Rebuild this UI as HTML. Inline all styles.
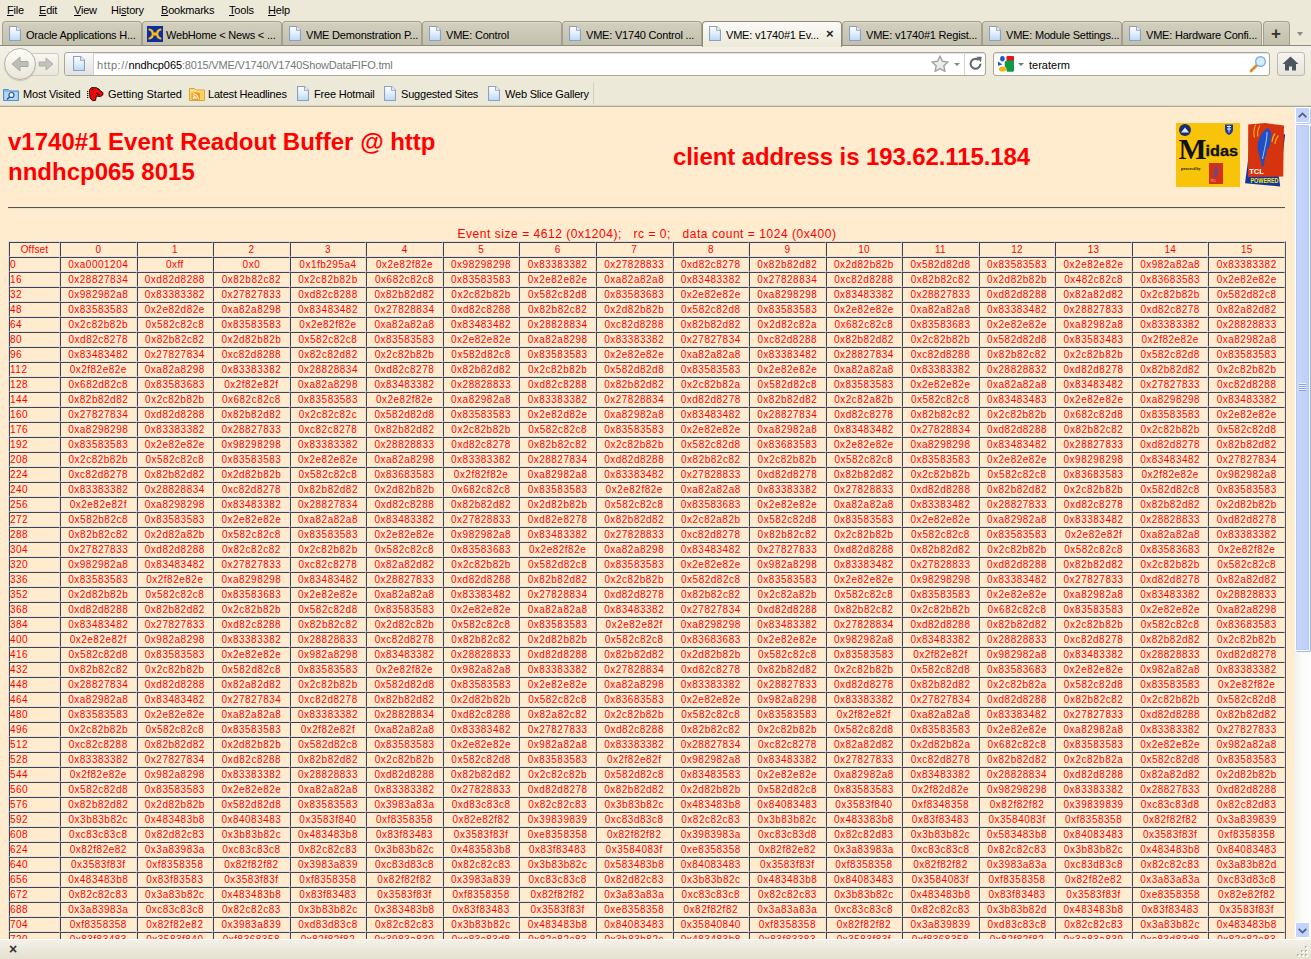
<!DOCTYPE html><html><head><meta charset="utf-8"><title>VME: v1740#1 Event Readout Buffer</title><style>
html,body{margin:0;padding:0;}
body{width:1311px;height:959px;overflow:hidden;background:#ECE9D8;position:relative;font-family:"Liberation Sans",sans-serif;}
#chrome{position:absolute;left:0;top:0;width:1311px;height:106px;background:#ECE9D8;font-size:11px;color:#000;}
.abs{position:absolute;}
.mi{position:absolute;top:3px;height:14px;line-height:14px;font-size:11px;white-space:nowrap;letter-spacing:-0.2px;}
.mi u{text-decoration:underline;}
.tab{position:absolute;top:21px;height:24px;width:138px;border:1px solid #a3a08f;border-bottom:none;border-radius:4px 4px 0 0;background:linear-gradient(#d3d0bf,#c1beab);box-shadow:inset 0 1px 0 #dedbcb;}
.tab.act{top:21px;height:25px;background:linear-gradient(#fbfaf6,#ECE9D8);border-color:#8e8b7c;z-index:3;box-shadow:none;}
.tab .tx{position:absolute;left:23px;top:6px;font-size:11px;line-height:14px;white-space:nowrap;overflow:hidden;width:114px;color:#000;letter-spacing:-0.2px;}
.tab.act .tx{top:6px;width:100px;}
.pg{position:absolute;width:12px;height:15px;}
#tabline{position:absolute;left:0;top:45px;width:1311px;height:1px;background:#8e8b7c;z-index:2;}
#navbar{position:absolute;left:0;top:46px;width:1311px;height:36px;background:linear-gradient(#f3f1e7,#ECE9D8);}
.box{position:absolute;top:52px;height:22px;border:1px solid #a9a799;border-radius:3px;background:#fff;box-shadow:inset 0 1px 1px rgba(0,0,0,.12);}
#content{position:absolute;left:0;top:107px;width:1294px;height:832px;overflow:hidden;background:#FFEBCD;color:#f00;}
#contentborder{position:absolute;left:0;top:105px;width:1311px;height:2px;background:#aca993;border-top:1px solid #d8d5c4;box-sizing:border-box;}
#page{position:absolute;left:8px;top:0;width:1278px;}
h1{font-size:24px;line-height:30px;margin:0;font-weight:bold;color:#f00;}
#hr{position:absolute;left:0;top:100px;width:1277px;height:0;border-top:1px solid #555;border-bottom:1px solid #e9e2d3;}
#cap{position:absolute;left:0;top:120px;width:1278px;letter-spacing:.54px;text-align:center;font-size:12px;line-height:14px;color:#f00;white-space:pre;}
table#d{position:absolute;left:0;top:134px;width:1278px;border-collapse:separate;border-spacing:0;border:1px solid;border-color:#dcdbe6 #555 #555 #dcdbe6;table-layout:fixed;font-size:10px;color:#f00;}
table#d td,table#d th{border:1px solid;border-color:#444 #e3e0e8 #e3e0e8 #444;padding:1px 0;height:11px;line-height:11px;text-align:center;font-weight:normal;white-space:nowrap;overflow:hidden;letter-spacing:.5px;}
table#d th{letter-spacing:.2px;}
table#d td.o{text-align:left;}
#sb{position:absolute;left:1294px;top:107px;width:17px;height:832px;background:linear-gradient(90deg,#f0f0ec,#fbfbf9 50%,#fefefe);}
#bottom{position:absolute;left:0;top:939px;width:1311px;height:20px;background:linear-gradient(#f3f1e7,#e4e1d0);border-top:1px solid #fff;box-sizing:border-box;}
</style></head><body>
<div id="chrome">
<div class="mi" style="left:7px"><u>F</u>ile</div>
<div class="mi" style="left:39px"><u>E</u>dit</div>
<div class="mi" style="left:74px"><u>V</u>iew</div>
<div class="mi" style="left:111px">Hi<u>s</u>tory</div>
<div class="mi" style="left:161px"><u>B</u>ookmarks</div>
<div class="mi" style="left:229px"><u>T</u>ools</div>
<div class="mi" style="left:268px"><u>H</u>elp</div>
<div class="tab" style="left:2px"><svg class="pg" style="left:6px;top:4px" width="12" height="15" viewBox="0 0 11 14" preserveAspectRatio="none"><defs><linearGradient id="pgg" x1="0" y1="0" x2="0" y2="1"><stop offset="0" stop-color="#ffffff"/><stop offset=".45" stop-color="#e6f1fd"/><stop offset="1" stop-color="#b9d9f8"/></linearGradient></defs><path d="M0.5 0.5h6.5l3.5 3.5v9.5h-10z" fill="url(#pgg)" stroke="#8c9fc4"/><path d="M7 0.5v3.5h3.5" fill="#fff" stroke="#8ea3c4"/></svg><div class="tx">Oracle Applications H...</div></div>
<div class="tab" style="left:142px"><svg class="abs" style="left:4px;top:4px" width="16" height="16" viewBox="0 0 16 16"><rect width="16" height="16" fill="#0c2ca0"/><path d="M2.500 3.500C7 4.500 7 11.500 2.500 12.500M13.500 3.500C9 4.500 9 11.500 13.500 12.500" stroke="#f8bc14" stroke-width="2.200" stroke-linecap="round" fill="none"/><circle cx="8" cy="8" r="1.800" fill="#f8bc14"/></svg><div class="tx">WebHome &lt; News &lt; ...</div></div>
<div class="tab" style="left:282px"><svg class="pg" style="left:6px;top:4px" width="12" height="15" viewBox="0 0 11 14" preserveAspectRatio="none"><defs><linearGradient id="pgg" x1="0" y1="0" x2="0" y2="1"><stop offset="0" stop-color="#ffffff"/><stop offset=".45" stop-color="#e6f1fd"/><stop offset="1" stop-color="#b9d9f8"/></linearGradient></defs><path d="M0.5 0.5h6.5l3.5 3.5v9.5h-10z" fill="url(#pgg)" stroke="#8c9fc4"/><path d="M7 0.5v3.5h3.5" fill="#fff" stroke="#8ea3c4"/></svg><div class="tx">VME Demonstration P...</div></div>
<div class="tab" style="left:422px"><svg class="pg" style="left:6px;top:4px" width="12" height="15" viewBox="0 0 11 14" preserveAspectRatio="none"><defs><linearGradient id="pgg" x1="0" y1="0" x2="0" y2="1"><stop offset="0" stop-color="#ffffff"/><stop offset=".45" stop-color="#e6f1fd"/><stop offset="1" stop-color="#b9d9f8"/></linearGradient></defs><path d="M0.5 0.5h6.5l3.5 3.5v9.5h-10z" fill="url(#pgg)" stroke="#8c9fc4"/><path d="M7 0.5v3.5h3.5" fill="#fff" stroke="#8ea3c4"/></svg><div class="tx">VME: Control</div></div>
<div class="tab" style="left:562px"><svg class="pg" style="left:6px;top:4px" width="12" height="15" viewBox="0 0 11 14" preserveAspectRatio="none"><defs><linearGradient id="pgg" x1="0" y1="0" x2="0" y2="1"><stop offset="0" stop-color="#ffffff"/><stop offset=".45" stop-color="#e6f1fd"/><stop offset="1" stop-color="#b9d9f8"/></linearGradient></defs><path d="M0.5 0.5h6.5l3.5 3.5v9.5h-10z" fill="url(#pgg)" stroke="#8c9fc4"/><path d="M7 0.5v3.5h3.5" fill="#fff" stroke="#8ea3c4"/></svg><div class="tx">VME: V1740 Control ...</div></div>
<div class="tab act" style="left:702px"><svg class="pg" style="left:6px;top:4px" width="12" height="15" viewBox="0 0 11 14" preserveAspectRatio="none"><defs><linearGradient id="pgg" x1="0" y1="0" x2="0" y2="1"><stop offset="0" stop-color="#ffffff"/><stop offset=".45" stop-color="#e6f1fd"/><stop offset="1" stop-color="#b9d9f8"/></linearGradient></defs><path d="M0.5 0.5h6.5l3.5 3.5v9.5h-10z" fill="url(#pgg)" stroke="#8c9fc4"/><path d="M7 0.5v3.5h3.5" fill="#fff" stroke="#8ea3c4"/></svg><div class="tx">VME: v1740#1 Ev...</div><div class="abs" style="left:123px;top:5px;font-size:13px;line-height:14px;font-weight:bold;color:#222">&#215;</div></div>
<div class="tab" style="left:842px"><svg class="pg" style="left:6px;top:4px" width="12" height="15" viewBox="0 0 11 14" preserveAspectRatio="none"><defs><linearGradient id="pgg" x1="0" y1="0" x2="0" y2="1"><stop offset="0" stop-color="#ffffff"/><stop offset=".45" stop-color="#e6f1fd"/><stop offset="1" stop-color="#b9d9f8"/></linearGradient></defs><path d="M0.5 0.5h6.5l3.5 3.5v9.5h-10z" fill="url(#pgg)" stroke="#8c9fc4"/><path d="M7 0.5v3.5h3.5" fill="#fff" stroke="#8ea3c4"/></svg><div class="tx">VME: v1740#1 Regist...</div></div>
<div class="tab" style="left:982px"><svg class="pg" style="left:6px;top:4px" width="12" height="15" viewBox="0 0 11 14" preserveAspectRatio="none"><defs><linearGradient id="pgg" x1="0" y1="0" x2="0" y2="1"><stop offset="0" stop-color="#ffffff"/><stop offset=".45" stop-color="#e6f1fd"/><stop offset="1" stop-color="#b9d9f8"/></linearGradient></defs><path d="M0.5 0.5h6.5l3.5 3.5v9.5h-10z" fill="url(#pgg)" stroke="#8c9fc4"/><path d="M7 0.5v3.5h3.5" fill="#fff" stroke="#8ea3c4"/></svg><div class="tx">VME: Module Settings...</div></div>
<div class="tab" style="left:1122px"><svg class="pg" style="left:6px;top:4px" width="12" height="15" viewBox="0 0 11 14" preserveAspectRatio="none"><defs><linearGradient id="pgg" x1="0" y1="0" x2="0" y2="1"><stop offset="0" stop-color="#ffffff"/><stop offset=".45" stop-color="#e6f1fd"/><stop offset="1" stop-color="#b9d9f8"/></linearGradient></defs><path d="M0.5 0.5h6.5l3.5 3.5v9.5h-10z" fill="url(#pgg)" stroke="#8c9fc4"/><path d="M7 0.5v3.5h3.5" fill="#fff" stroke="#8ea3c4"/></svg><div class="tx">VME: Hardware Confi...</div></div>
<div id="tabline"></div>
<div class="tab" style="left:1263px;width:25px"><div class="abs" style="left:7px;top:2px;font-size:17px;line-height:20px;font-weight:bold;color:#333">+</div></div>
<div class="abs" style="left:1297px;top:32px;width:0;height:0;border-left:3px solid transparent;border-right:3px solid transparent;border-top:4px solid #8b8b88"></div>
<div id="navbar"></div>
<div class="abs" style="left:28px;top:53px;width:29px;height:21px;border:1px solid #cfccbe;border-radius:0 3px 3px 0;background:linear-gradient(#f8f7f1,#e9e6d9)"></div>
<svg class="abs" style="left:38px;top:56px" width="16" height="16" viewBox="0 0 16 16"><path d="M1 6h7V2l7 6-7 6v-4H1z" fill="#c3c3bd" stroke="#b0b0a9" stroke-width="1"/></svg>
<div class="abs" style="left:4px;top:48px;width:30px;height:30px;border:1px solid #b5b2a3;border-radius:16px;background:linear-gradient(#fdfcf9,#e9e6d8);box-shadow:0 1px 1px rgba(0,0,0,.15)"></div>
<svg class="abs" style="left:11px;top:55px" width="18" height="18" viewBox="0 0 18 18"><path d="M17 6.5H9V2L1 9l8 7v-4.5h8z" fill="#bdbdb7" stroke="#a9a9a2" stroke-width="1"/></svg>
<div class="box" style="left:64px;width:920px"></div>
<div class="abs" style="left:65px;top:53px;width:28px;height:22px;background:linear-gradient(#fafafa,#e2e2e2);border-right:1px solid #d0d0d0;border-radius:3px 0 0 3px"></div>
<svg class="pg" style="left:73px;top:56px" width="12" height="15" viewBox="0 0 11 14" preserveAspectRatio="none"><defs><linearGradient id="pgg" x1="0" y1="0" x2="0" y2="1"><stop offset="0" stop-color="#ffffff"/><stop offset=".45" stop-color="#e6f1fd"/><stop offset="1" stop-color="#b9d9f8"/></linearGradient></defs><path d="M0.5 0.5h6.5l3.5 3.5v9.5h-10z" fill="url(#pgg)" stroke="#8c9fc4"/><path d="M7 0.5v3.5h3.5" fill="#fff" stroke="#8ea3c4"/></svg>
<div class="abs" style="left:97px;top:58px;font-size:11px;line-height:15px;color:#777;white-space:nowrap"><span style="letter-spacing:.55px">http://</span><span style="color:#000;letter-spacing:-0.1px">nndhcp065</span><span style="letter-spacing:-0.19px">:8015/VME/V1740/V1740ShowDataFIFO.tml</span></div>
<svg class="abs" style="left:931px;top:55px" width="18" height="18" viewBox="0 0 16 16"><path d="M8 1l2.100 4.600 5 .6-3.700 3.400 1 5L8 12.100 3.600 14.600l1-5L.9 6.200l5-.6z" fill="#ececec" stroke="#a4a4a4" stroke-width="1.300" stroke-linejoin="round"/></svg>
<div class="abs" style="left:954px;top:63px;width:0;height:0;border-left:3px solid transparent;border-right:3px solid transparent;border-top:3px solid #888"></div>
<div class="abs" style="left:964px;top:54px;width:1px;height:21px;background:#d6d4c8"></div>
<svg class="abs" style="left:968px;top:56px" width="15" height="15" viewBox="0 0 14 14"><path d="M11.600 7.300a4.600 4.600 0 1 1-1.700-3.600" fill="none" stroke="#626a72" stroke-width="2"/><path d="M7.800 0.600l5 .2-.8 5z" fill="#626a72"/></svg>
<div class="box" style="left:993px;width:275px"></div>
<svg class="abs" style="left:998px;top:56px" width="16" height="16" viewBox="0 0 16 16"><rect width="16" height="16" rx="1.500" fill="#fff"/><rect x="8.500" y="0" width="7.500" height="5" rx="1" fill="#e8141c"/><path d="M6.700 5.500l2-1h7.300v10.500l-1 .8h-6l-.8-3.500-1.500-2z" fill="#0f9a47"/><ellipse cx="4.400" cy="2.700" rx="2.300" ry="2.700" fill="#1d56d8"/><path d="M0 5.500l4.400 2.900L0 9.800z" fill="#1d56d8"/><ellipse cx="4.600" cy="13" rx="3.600" ry="2.600" fill="#f4b60c"/></svg>
<div class="abs" style="left:1018px;top:63px;width:0;height:0;border-left:3px solid transparent;border-right:3px solid transparent;border-top:3px solid #777"></div>
<div class="abs" style="left:1029px;top:58px;font-size:11px;line-height:15px;color:#000">teraterm</div>
<svg class="abs" style="left:1249px;top:56px" width="17" height="17" viewBox="0 0 17 17"><path d="M2 15l6-6" stroke="#e3852c" stroke-width="2.800" stroke-linecap="round"/><circle cx="11.500" cy="5.500" r="4.800" fill="#d4ecfc" stroke="#7fb0e0" stroke-width="1.400"/></svg>
<div class="abs" style="left:1277px;top:52px;width:26px;height:22px;border:1px solid #bdbbae;border-radius:3px;background:linear-gradient(#f6f5f1,#e6e4da)"></div>
<svg class="abs" style="left:1282px;top:56px" width="17" height="15" viewBox="0 0 17 15"><path d="M8.500 0.500L0.500 8h2.500v6.500h4v-4h3v4h4V8h2.500z" fill="#4b5560"/></svg>
<svg class="abs" style="left:3px;top:86px" width="16" height="16" viewBox="0 0 16 16"><path d="M0.500 3.500h5l1.500 1.500h8.500v9.500h-15z" fill="#86bbea" stroke="#4f8fd0"/><rect x="1.500" y="6" width="13" height="8" fill="#b4d7f5"/><circle cx="8.500" cy="9" r="2.500" fill="#e9f4ff" stroke="#2d5a8c" stroke-width="1.200"/><path d="M6.500 11l-2.500 2.500" stroke="#2d5a8c" stroke-width="1.600"/></svg><div class="abs" style="left:23px;top:87px;font-size:11px;line-height:14px;white-space:nowrap;letter-spacing:-0.2px">Most Visited</div>
<svg class="abs" style="left:87px;top:86px" width="17" height="16" viewBox="0 0 17 16"><path d="M2.700 3.400L4.600 1.500l5.200.3 2.300 1.900 3.800 2.900v2.300l-2.400 1.700-4.100-.5-.9 4.300-3 .3L3 11.900 2.500 7.300z" fill="#f20808" stroke="#1a0808" stroke-width=".9" stroke-linejoin="round"/><path d="M9.400 7.300l3.600 1.600" stroke="#200" stroke-width="1.200"/><circle cx="5.600" cy="3.600" r=".8" fill="#300"/><circle cx="5.600" cy="8.200" r=".7" fill="#500"/><path d="M11 2.800l1.300 1" stroke="#111" stroke-width="1.200"/><g fill="#111"><rect x="0" y="4.900" width="1.300" height="1.100"/><rect x="0" y="6.900" width="1.300" height="1.100"/><rect x="0" y="8.900" width="1.300" height="1.100"/><rect x="0" y="10.900" width="1.300" height="1.100"/></g></svg><div class="abs" style="left:108px;top:87px;font-size:11px;line-height:14px;white-space:nowrap;letter-spacing:-0.2px"><span style="letter-spacing:0">Getting Started</span></div>
<svg class="abs" style="left:189px;top:86px" width="16" height="16" viewBox="0 0 16 16"><path d="M0.500 2.500h5l1.500 1.500h8.500v10.500h-15z" fill="#f9dc80" stroke="#d6a63a"/><path d="M1.500 6h13v7.500h-13z" fill="#f6cf5c"/><rect x="2.500" y="6.500" width="8.500" height="7.500" rx="1.500" fill="#f2981c"/><circle cx="4.700" cy="12" r="1" fill="#fff"/><path d="M3.800 9.700a3.200 3.200 0 0 1 3.300 3.300M3.800 7.700a5.200 5.200 0 0 1 5.400 5.300" stroke="#fff" stroke-width="1.100" fill="none"/></svg><div class="abs" style="left:208px;top:87px;font-size:11px;line-height:14px;white-space:nowrap;letter-spacing:-0.2px">Latest Headlines</div>
<svg class="pg" style="left:297px;top:86px" width="12" height="15" viewBox="0 0 11 14" preserveAspectRatio="none"><defs><linearGradient id="pgg" x1="0" y1="0" x2="0" y2="1"><stop offset="0" stop-color="#ffffff"/><stop offset=".45" stop-color="#e6f1fd"/><stop offset="1" stop-color="#b9d9f8"/></linearGradient></defs><path d="M0.5 0.5h6.5l3.5 3.5v9.5h-10z" fill="url(#pgg)" stroke="#8c9fc4"/><path d="M7 0.5v3.5h3.5" fill="#fff" stroke="#8ea3c4"/></svg><div class="abs" style="left:314px;top:87px;font-size:11px;line-height:14px;white-space:nowrap;letter-spacing:-0.2px">Free Hotmail</div>
<svg class="pg" style="left:384px;top:86px" width="12" height="15" viewBox="0 0 11 14" preserveAspectRatio="none"><defs><linearGradient id="pgg" x1="0" y1="0" x2="0" y2="1"><stop offset="0" stop-color="#ffffff"/><stop offset=".45" stop-color="#e6f1fd"/><stop offset="1" stop-color="#b9d9f8"/></linearGradient></defs><path d="M0.5 0.5h6.5l3.5 3.5v9.5h-10z" fill="url(#pgg)" stroke="#8c9fc4"/><path d="M7 0.5v3.5h3.5" fill="#fff" stroke="#8ea3c4"/></svg><div class="abs" style="left:401px;top:87px;font-size:11px;line-height:14px;white-space:nowrap;letter-spacing:-0.2px">Suggested Sites</div>
<svg class="pg" style="left:488px;top:86px" width="12" height="15" viewBox="0 0 11 14" preserveAspectRatio="none"><defs><linearGradient id="pgg" x1="0" y1="0" x2="0" y2="1"><stop offset="0" stop-color="#ffffff"/><stop offset=".45" stop-color="#e6f1fd"/><stop offset="1" stop-color="#b9d9f8"/></linearGradient></defs><path d="M0.5 0.5h6.5l3.5 3.5v9.5h-10z" fill="url(#pgg)" stroke="#8c9fc4"/><path d="M7 0.5v3.5h3.5" fill="#fff" stroke="#8ea3c4"/></svg><div class="abs" style="left:505px;top:87px;font-size:11px;line-height:14px;white-space:nowrap;letter-spacing:-0.2px">Web Slice Gallery</div>
<div class="abs" style="left:593px;top:82px;width:1px;height:22px;background:#d3d0c0"></div>
<div id="contentborder"></div>
</div>
<div id="content"><div id="page">
<h1 class="abs" style="left:0;top:20px;width:520px">v1740#1 Event Readout Buffer @ http nndhcp065 8015</h1>
<h1 class="abs" style="left:665px;top:35px;white-space:nowrap;letter-spacing:-0.1px">client address is 193.62.115.184</h1>
<svg class="abs" style="left:1168px;top:16px" width="64" height="64" viewBox="0 0 64 64">
<rect width="64" height="64" fill="#f7c40a"/>
<circle cx="9" cy="7" r="6" fill="#1b2f6e"/><path d="M5 9.500l4-5 4 5z" fill="#dfe6f5"/>
<path d="M49 1.500h8v5c0 3-2 4.500-4 5.500-2-1-4-2.500-4-5.500z" fill="#1d3a9a"/><path d="M51 3h4v1h-4zM51 5.500h4v1h-4zM52.500 2.500h1v7h-1z" fill="#e8ecf8"/>
<text x="2.500" y="35.500" font-family="Liberation Serif,serif" font-weight="bold" font-size="29.500" fill="#111" textLength="28" lengthAdjust="spacingAndGlyphs">M</text>
<text x="29.500" y="33" font-family="Liberation Sans,sans-serif" font-weight="bold" font-size="14.500" fill="#111" stroke="#111" stroke-width=".3" textLength="32.500" lengthAdjust="spacingAndGlyphs">idas</text>
<text x="5" y="46.500" font-family="Liberation Serif,serif" font-weight="bold" font-size="4.500" fill="#111" textLength="19.500" lengthAdjust="spacingAndGlyphs">powered by</text>
<rect x="33" y="40" width="14" height="21" fill="#d3301a"/><path d="M40 43c2 2 1.500 7-.5 12l-.8-.2c0-4-.2-8 1.300-11.800z" fill="#2a58c8"/><text x="34.500" y="59" font-family="Liberation Sans,sans-serif" font-size="3" fill="#f6d8a0">TCL</text>
</svg>
<svg class="abs" style="left:1237px;top:16px" width="41" height="64" viewBox="0 0 41 64">
<path d="M36 10.500l4.200 1-2.500 20-2.700 18z" fill="#1236a0"/>
<path d="M3.500 34L0 60.200l35.200 3.300-1.500-11z" fill="#1236a0"/>
<path d="M3.200 1.500L20 0l19 2.500-.8 51L3 54z" fill="#d5340f"/>
<path d="M22.500 4.800c3.500 2.500 4.600 6.500 3.800 10.500l-2.300 1.700 2 .5c-.5 3.500-1.800 6.500-3.200 9l-2.300 1 1.600 1c-1.500 4-2.500 8-3.800 15.700l-1.600-.4c-.3-5-1.800-8.500-2.900-12.500-1.600-6-1.600-10.500.3-15.500 1.700-4.500 4.600-8.500 8.400-11z" fill="#1f4fc4"/>
<path d="M22 9c.5 7-2.500 16-4.500 27" stroke="#9db8ee" stroke-width="1.100" fill="none"/>
<path d="M9.500 14.500c-1.200-5-.6-9.500 1.300-13M12.800 13.500c-.6-4 .3-8 2-11M27 19c.3-3.500 1.300-6.500 3-8.500M29.800 21c.5-3.500 1.700-6.500 3.600-8.500" stroke="#f4a81c" stroke-width="1.200" fill="none"/>
<text x="4.200" y="51.300" font-family="Liberation Sans,sans-serif" font-weight="bold" font-size="7" fill="#fff" textLength="14.500" lengthAdjust="spacingAndGlyphs">TCL</text>
<text x="5.500" y="59.800" font-family="Liberation Sans,sans-serif" font-weight="bold" font-size="6.500" fill="#f4e61a" textLength="28" lengthAdjust="spacingAndGlyphs">POWERED</text>
</svg>
<div id="hr"></div>
<div id="cap">Event size = 4612 (0x1204);   rc = 0;   data count = 1024 (0x400)</div>
<table id="d"><colgroup><col style="width:51px"><col><col><col><col><col><col><col><col><col><col><col><col><col><col><col><col></colgroup>
<tr><th>Offset</th><th>0</th><th>1</th><th>2</th><th>3</th><th>4</th><th>5</th><th>6</th><th>7</th><th>8</th><th>9</th><th>10</th><th>11</th><th>12</th><th>13</th><th>14</th><th>15</th></tr>
<tr><td class="o">0</td><td>0xa0001204</td><td>0xff</td><td>0x0</td><td>0x1fb295a4</td><td>0x2e82f82e</td><td>0x98298298</td><td>0x83383382</td><td>0x27828833</td><td>0xd82c8278</td><td>0x82b82d82</td><td>0x2d82b82b</td><td>0x582d82d8</td><td>0x83583583</td><td>0x2e82e82e</td><td>0x982a82a8</td><td>0x83383382</td></tr>
<tr><td class="o">16</td><td>0x28827834</td><td>0xd82d8288</td><td>0x82b82c82</td><td>0x2c82b82b</td><td>0x682c82c8</td><td>0x83583583</td><td>0x2e82e82e</td><td>0xa82a82a8</td><td>0x83483382</td><td>0x27828834</td><td>0xc82d8288</td><td>0x82b82c82</td><td>0x2d82b82b</td><td>0x482c82c8</td><td>0x83683583</td><td>0x2e82e82e</td></tr>
<tr><td class="o">32</td><td>0x982982a8</td><td>0x83383382</td><td>0x27827833</td><td>0xd82c8288</td><td>0x82b82d82</td><td>0x2c82b82b</td><td>0x582c82d8</td><td>0x83583683</td><td>0x2e82e82e</td><td>0xa8298298</td><td>0x83483382</td><td>0x28827833</td><td>0xd82d8288</td><td>0x82a82d82</td><td>0x2c82b82b</td><td>0x582d82c8</td></tr>
<tr><td class="o">48</td><td>0x83583583</td><td>0x2e82d82e</td><td>0xa82a8298</td><td>0x83483482</td><td>0x27828834</td><td>0xd82c8288</td><td>0x82b82c82</td><td>0x2d82b82b</td><td>0x582c82d8</td><td>0x83583583</td><td>0x2e82e82e</td><td>0xa82a82a8</td><td>0x83383482</td><td>0x28827833</td><td>0xd82c8278</td><td>0x82a82d82</td></tr>
<tr><td class="o">64</td><td>0x2c82b82b</td><td>0x582c82c8</td><td>0x83583583</td><td>0x2e82f82e</td><td>0xa82a82a8</td><td>0x83483482</td><td>0x28828834</td><td>0xc82d8288</td><td>0x82b82d82</td><td>0x2d82c82a</td><td>0x682c82c8</td><td>0x83583683</td><td>0x2e82e82e</td><td>0xa82982a8</td><td>0x83383382</td><td>0x28828833</td></tr>
<tr><td class="o">80</td><td>0xd82c8278</td><td>0x82b82c82</td><td>0x2d82b82b</td><td>0x582c82c8</td><td>0x83583583</td><td>0x2e82e82e</td><td>0xa82a8298</td><td>0x83383382</td><td>0x27827834</td><td>0xc82d8288</td><td>0x82b82d82</td><td>0x2c82b82b</td><td>0x582d82d8</td><td>0x83583483</td><td>0x2f82e82e</td><td>0xa82982a8</td></tr>
<tr><td class="o">96</td><td>0x83483482</td><td>0x27827834</td><td>0xc82d8288</td><td>0x82c82d82</td><td>0x2c82b82b</td><td>0x582d82c8</td><td>0x83583583</td><td>0x2e82e82e</td><td>0xa82a82a8</td><td>0x83383482</td><td>0x28827834</td><td>0xc82d8288</td><td>0x82b82c82</td><td>0x2c82b82b</td><td>0x582c82d8</td><td>0x83583583</td></tr>
<tr><td class="o">112</td><td>0x2f82e82e</td><td>0xa82a8298</td><td>0x83383382</td><td>0x28828834</td><td>0xd82c8278</td><td>0x82b82d82</td><td>0x2c82b82b</td><td>0x582d82d8</td><td>0x83583583</td><td>0x2e82e82e</td><td>0xa82a82a8</td><td>0x83383382</td><td>0x28828832</td><td>0xd82d8278</td><td>0x82b82d82</td><td>0x2c82b82b</td></tr>
<tr><td class="o">128</td><td>0x682d82c8</td><td>0x83583683</td><td>0x2f82e82f</td><td>0xa82a8298</td><td>0x83483382</td><td>0x28828833</td><td>0xd82c8288</td><td>0x82b82d82</td><td>0x2c82b82a</td><td>0x582d82c8</td><td>0x83583583</td><td>0x2e82e82e</td><td>0xa82a82a8</td><td>0x83483482</td><td>0x27827833</td><td>0xc82d8288</td></tr>
<tr><td class="o">144</td><td>0x82b82d82</td><td>0x2c82b82b</td><td>0x682c82c8</td><td>0x83583583</td><td>0x2e82f82e</td><td>0xa82982a8</td><td>0x83383382</td><td>0x27828834</td><td>0xd82d8278</td><td>0x82b82d82</td><td>0x2c82a82b</td><td>0x582c82c8</td><td>0x83483483</td><td>0x2e82e82e</td><td>0xa8298298</td><td>0x83483382</td></tr>
<tr><td class="o">160</td><td>0x27827834</td><td>0xd82d8288</td><td>0x82b82d82</td><td>0x2c82c82c</td><td>0x582d82d8</td><td>0x83583583</td><td>0x2e82d82e</td><td>0xa82982a8</td><td>0x83483482</td><td>0x28827834</td><td>0xd82c8278</td><td>0x82b82c82</td><td>0x2c82b82b</td><td>0x682c82d8</td><td>0x83583583</td><td>0x2e82e82e</td></tr>
<tr><td class="o">176</td><td>0xa8298298</td><td>0x83383382</td><td>0x28827833</td><td>0xc82c8278</td><td>0x82b82d82</td><td>0x2c82b82b</td><td>0x582c82c8</td><td>0x83583583</td><td>0x2e82e82e</td><td>0xa82982a8</td><td>0x83483482</td><td>0x27828834</td><td>0xd82d8288</td><td>0x82b82c82</td><td>0x2c82b82b</td><td>0x582c82d8</td></tr>
<tr><td class="o">192</td><td>0x83583583</td><td>0x2e82e82e</td><td>0x98298298</td><td>0x83383382</td><td>0x28828833</td><td>0xd82c8278</td><td>0x82b82c82</td><td>0x2c82b82b</td><td>0x582c82d8</td><td>0x83683583</td><td>0x2e82e82e</td><td>0xa8298298</td><td>0x83483482</td><td>0x28827833</td><td>0xd82d8278</td><td>0x82b82d82</td></tr>
<tr><td class="o">208</td><td>0x2c82b82b</td><td>0x582c82c8</td><td>0x83583583</td><td>0x2e82e82e</td><td>0xa82a8298</td><td>0x83383382</td><td>0x28827834</td><td>0xd82d8288</td><td>0x82b82c82</td><td>0x2c82b82b</td><td>0x582c82c8</td><td>0x83583583</td><td>0x2e82e82e</td><td>0x98298298</td><td>0x83483482</td><td>0x27827834</td></tr>
<tr><td class="o">224</td><td>0xc82d8278</td><td>0x82b82d82</td><td>0x2d82b82b</td><td>0x582c82c8</td><td>0x83683583</td><td>0x2f82f82e</td><td>0xa82982a8</td><td>0x83383482</td><td>0x27828833</td><td>0xd82d8278</td><td>0x82b82d82</td><td>0x2c82b82b</td><td>0x582c82c8</td><td>0x83683583</td><td>0x2f82e82e</td><td>0x982982a8</td></tr>
<tr><td class="o">240</td><td>0x83383382</td><td>0x28828834</td><td>0xc82d8278</td><td>0x82b82d82</td><td>0x2d82b82b</td><td>0x682c82c8</td><td>0x83583583</td><td>0x2e82f82e</td><td>0xa82a82a8</td><td>0x83383382</td><td>0x27828833</td><td>0xd82d8288</td><td>0x82b82d82</td><td>0x2c82b82b</td><td>0x582d82c8</td><td>0x83583583</td></tr>
<tr><td class="o">256</td><td>0x2e82e82f</td><td>0xa8298298</td><td>0x83483382</td><td>0x28827834</td><td>0xd82c8288</td><td>0x82b82d82</td><td>0x2d82b82b</td><td>0x582c82c8</td><td>0x83583683</td><td>0x2e82e82e</td><td>0xa82a82a8</td><td>0x83383482</td><td>0x28827833</td><td>0xd82c8278</td><td>0x82b82d82</td><td>0x2d82b82b</td></tr>
<tr><td class="o">272</td><td>0x582b82c8</td><td>0x83583583</td><td>0x2e82e82e</td><td>0xa82a82a8</td><td>0x83483382</td><td>0x27828833</td><td>0xd82e8278</td><td>0x82b82d82</td><td>0x2c82a82b</td><td>0x582c82d8</td><td>0x83583583</td><td>0x2e82e82e</td><td>0xa82982a8</td><td>0x83383482</td><td>0x28828833</td><td>0xd82d8278</td></tr>
<tr><td class="o">288</td><td>0x82b82c82</td><td>0x2d82a82b</td><td>0x582c82c8</td><td>0x83583583</td><td>0x2e82e82e</td><td>0x982982a8</td><td>0x83483382</td><td>0x27828833</td><td>0xc82d8278</td><td>0x82b82c82</td><td>0x2c82b82b</td><td>0x582c82c8</td><td>0x83583583</td><td>0x2e82e82f</td><td>0xa82a82a8</td><td>0x83383382</td></tr>
<tr><td class="o">304</td><td>0x27827833</td><td>0xd82d8288</td><td>0x82c82c82</td><td>0x2c82b82b</td><td>0x582c82c8</td><td>0x83583683</td><td>0x2e82f82e</td><td>0xa82a8298</td><td>0x83483482</td><td>0x27827833</td><td>0xd82d8288</td><td>0x82b82d82</td><td>0x2c82b82b</td><td>0x582c82c8</td><td>0x83583683</td><td>0x2e82f82e</td></tr>
<tr><td class="o">320</td><td>0x982982a8</td><td>0x83483482</td><td>0x27827833</td><td>0xc82c8278</td><td>0x82a82d82</td><td>0x2c82b82b</td><td>0x582d82c8</td><td>0x83583583</td><td>0x2e82e82e</td><td>0x982a8298</td><td>0x83383482</td><td>0x27828833</td><td>0xd82d8288</td><td>0x82b82d82</td><td>0x2c82b82b</td><td>0x582c82c8</td></tr>
<tr><td class="o">336</td><td>0x83583583</td><td>0x2f82e82e</td><td>0xa8298298</td><td>0x83483482</td><td>0x28827833</td><td>0xd82d8288</td><td>0x82b82d82</td><td>0x2c82b82b</td><td>0x582d82c8</td><td>0x83583583</td><td>0x2e82e82e</td><td>0x98298298</td><td>0x83383482</td><td>0x27827833</td><td>0xd82d8278</td><td>0x82a82d82</td></tr>
<tr><td class="o">352</td><td>0x2d82b82b</td><td>0x582c82c8</td><td>0x83583683</td><td>0x2e82e82e</td><td>0xa82a82a8</td><td>0x83383482</td><td>0x27828834</td><td>0xd82d8278</td><td>0x82b82c82</td><td>0x2c82a82b</td><td>0x582c82c8</td><td>0x83583583</td><td>0x2e82e82e</td><td>0xa82982a8</td><td>0x83483382</td><td>0x28828833</td></tr>
<tr><td class="o">368</td><td>0xd82d8288</td><td>0x82b82d82</td><td>0x2c82b82b</td><td>0x582c82d8</td><td>0x83583583</td><td>0x2e82e82e</td><td>0xa82a82a8</td><td>0x83483382</td><td>0x27827834</td><td>0xd82d8288</td><td>0x82b82c82</td><td>0x2c82b82b</td><td>0x682c82c8</td><td>0x83583583</td><td>0x2e82e82e</td><td>0xa82a8298</td></tr>
<tr><td class="o">384</td><td>0x83483482</td><td>0x27827833</td><td>0xd82c8288</td><td>0x82b82c82</td><td>0x2d82c82b</td><td>0x582c82c8</td><td>0x83583583</td><td>0x2e82e82f</td><td>0xa8298298</td><td>0x83483382</td><td>0x27828834</td><td>0xd82d8288</td><td>0x82b82d82</td><td>0x2c82b82b</td><td>0x582c82c8</td><td>0x83683583</td></tr>
<tr><td class="o">400</td><td>0x2e82e82f</td><td>0x982a8298</td><td>0x83383382</td><td>0x28828833</td><td>0xc82d8278</td><td>0x82b82c82</td><td>0x2d82b82b</td><td>0x582c82c8</td><td>0x83683683</td><td>0x2e82e82e</td><td>0x982982a8</td><td>0x83483382</td><td>0x28828833</td><td>0xc82d8278</td><td>0x82b82d82</td><td>0x2c82b82b</td></tr>
<tr><td class="o">416</td><td>0x582c82d8</td><td>0x83583583</td><td>0x2e82e82e</td><td>0x982a8298</td><td>0x83483382</td><td>0x28828833</td><td>0xd82d8288</td><td>0x82b82d82</td><td>0x2d82b82b</td><td>0x582c82c8</td><td>0x83583583</td><td>0x2f82e82f</td><td>0x982982a8</td><td>0x83483382</td><td>0x28828833</td><td>0xd82d8278</td></tr>
<tr><td class="o">432</td><td>0x82b82c82</td><td>0x2c82b82b</td><td>0x582d82c8</td><td>0x83583583</td><td>0x2e82f82e</td><td>0x982a82a8</td><td>0x83383382</td><td>0x27828834</td><td>0xd82c8278</td><td>0x82b82d82</td><td>0x2c82b82b</td><td>0x582c82d8</td><td>0x83583683</td><td>0x2e82e82e</td><td>0x982a82a8</td><td>0x83383382</td></tr>
<tr><td class="o">448</td><td>0x28827834</td><td>0xd82d8288</td><td>0x82a82d82</td><td>0x2c82b82b</td><td>0x582d82d8</td><td>0x83583583</td><td>0x2e82e82e</td><td>0xa82a8298</td><td>0x83383382</td><td>0x28827833</td><td>0xd82d8278</td><td>0x82b82d82</td><td>0x2c82b82a</td><td>0x582c82d8</td><td>0x83583583</td><td>0x2e82f82e</td></tr>
<tr><td class="o">464</td><td>0xa82982a8</td><td>0x83483482</td><td>0x27827834</td><td>0xc82d8278</td><td>0x82b82d82</td><td>0x2d82b82b</td><td>0x582c82c8</td><td>0x83683583</td><td>0x2e82e82e</td><td>0x982a8298</td><td>0x83383382</td><td>0x27827834</td><td>0xd82d8288</td><td>0x82b82c82</td><td>0x2c82b82b</td><td>0x582c82d8</td></tr>
<tr><td class="o">480</td><td>0x83583583</td><td>0x2e82e82e</td><td>0xa82a82a8</td><td>0x83383382</td><td>0x28828834</td><td>0xd82c8288</td><td>0x82a82c82</td><td>0x2c82b82b</td><td>0x582c82c8</td><td>0x83583583</td><td>0x2f82e82f</td><td>0xa82a82a8</td><td>0x83383482</td><td>0x27827833</td><td>0xd82d8288</td><td>0x82b82d82</td></tr>
<tr><td class="o">496</td><td>0x2c82b82b</td><td>0x582c82c8</td><td>0x83583583</td><td>0x2f82e82f</td><td>0xa82a82a8</td><td>0x83383482</td><td>0x27827833</td><td>0xd82c8288</td><td>0x82b82c82</td><td>0x2c82b82b</td><td>0x582c82d8</td><td>0x83583583</td><td>0x2e82e82e</td><td>0xa82982a8</td><td>0x83383382</td><td>0x27827833</td></tr>
<tr><td class="o">512</td><td>0xc82c8288</td><td>0x82b82d82</td><td>0x2d82b82b</td><td>0x582d82c8</td><td>0x83583583</td><td>0x2e82e82e</td><td>0x982a82a8</td><td>0x83383382</td><td>0x28827834</td><td>0xc82c8278</td><td>0x82a82d82</td><td>0x2d82b82a</td><td>0x682c82c8</td><td>0x83583583</td><td>0x2e82e82e</td><td>0x982a82a8</td></tr>
<tr><td class="o">528</td><td>0x83383382</td><td>0x27827834</td><td>0xd82c8288</td><td>0x82b82d82</td><td>0x2c82b82b</td><td>0x582c82d8</td><td>0x83583583</td><td>0x2f82e82f</td><td>0x982982a8</td><td>0x83483382</td><td>0x27827833</td><td>0xc82d8278</td><td>0x82b82d82</td><td>0x2c82b82a</td><td>0x582c82d8</td><td>0x83583583</td></tr>
<tr><td class="o">544</td><td>0x2f82e82e</td><td>0x982a8298</td><td>0x83383382</td><td>0x28828833</td><td>0xd82d8288</td><td>0x82b82d82</td><td>0x2c82c82b</td><td>0x582d82c8</td><td>0x83483583</td><td>0x2e82e82e</td><td>0xa82982a8</td><td>0x83483382</td><td>0x28828834</td><td>0xd82d8288</td><td>0x82a82d82</td><td>0x2d82b82b</td></tr>
<tr><td class="o">560</td><td>0x582c82d8</td><td>0x83583583</td><td>0x2e82e82e</td><td>0xa82a82a8</td><td>0x83383382</td><td>0x27828833</td><td>0xd82d8278</td><td>0x82b82d82</td><td>0x2d82b82b</td><td>0x582d82c8</td><td>0x83583583</td><td>0x2f82d82e</td><td>0x98298298</td><td>0x83383382</td><td>0x28827833</td><td>0xd82d8288</td></tr>
<tr><td class="o">576</td><td>0x82b82d82</td><td>0x2d82b82b</td><td>0x582d82d8</td><td>0x83583583</td><td>0x3983a83a</td><td>0xd83c83c8</td><td>0x82c82c83</td><td>0x3b83b82c</td><td>0x483483b8</td><td>0x84083483</td><td>0x3583f840</td><td>0xf8348358</td><td>0x82f82f82</td><td>0x39839839</td><td>0xc83c83d8</td><td>0x82c82d83</td></tr>
<tr><td class="o">592</td><td>0x3b83b82c</td><td>0x483483b8</td><td>0x84083483</td><td>0x3583f840</td><td>0xf8358358</td><td>0x82e82f82</td><td>0x39839839</td><td>0xc83d83c8</td><td>0x82c82c83</td><td>0x3b83b82c</td><td>0x483383b8</td><td>0x83f83483</td><td>0x3584083f</td><td>0xf8358358</td><td>0x82f82f82</td><td>0x3a839839</td></tr>
<tr><td class="o">608</td><td>0xc83c83c8</td><td>0x82d82c83</td><td>0x3b83b82c</td><td>0x483483b8</td><td>0x83f83483</td><td>0x3583f83f</td><td>0xe8358358</td><td>0x82f82f82</td><td>0x3983983a</td><td>0xc83c83d8</td><td>0x82c82d83</td><td>0x3b83b82c</td><td>0x583483b8</td><td>0x84083483</td><td>0x3583f83f</td><td>0xf8358358</td></tr>
<tr><td class="o">624</td><td>0x82f82e82</td><td>0x3a83983a</td><td>0xc83c83c8</td><td>0x82c82c83</td><td>0x3b83b82c</td><td>0x483583b8</td><td>0x83f83483</td><td>0x3584083f</td><td>0xe8358358</td><td>0x82f82e82</td><td>0x3a83983a</td><td>0xc83c83c8</td><td>0x82c82c83</td><td>0x3b83b82c</td><td>0x483483b8</td><td>0x84083483</td></tr>
<tr><td class="o">640</td><td>0x3583f83f</td><td>0xf8358358</td><td>0x82f82f82</td><td>0x3983a839</td><td>0xc83d83c8</td><td>0x82c82c83</td><td>0x3b83b82c</td><td>0x583483b8</td><td>0x84083483</td><td>0x3583f83f</td><td>0xf8358358</td><td>0x82f82f82</td><td>0x3983a83a</td><td>0xc83d83c8</td><td>0x82c82c83</td><td>0x3a83b82d</td></tr>
<tr><td class="o">656</td><td>0x483483b8</td><td>0x83f83583</td><td>0x3583f83f</td><td>0xf8358358</td><td>0x82f82f82</td><td>0x3983a839</td><td>0xc83c83c8</td><td>0x82d82c83</td><td>0x3b83b82c</td><td>0x483483b8</td><td>0x84083483</td><td>0x3584083f</td><td>0xf8358358</td><td>0x82f82e82</td><td>0x3a83a83a</td><td>0xc83d83c8</td></tr>
<tr><td class="o">672</td><td>0x82c82c83</td><td>0x3a83b82c</td><td>0x483483b8</td><td>0x83f83483</td><td>0x3583f83f</td><td>0xf8358358</td><td>0x82f82f82</td><td>0x3a83a83a</td><td>0xc83c83c8</td><td>0x82c82c83</td><td>0x3b83b82c</td><td>0x483483b8</td><td>0x83f83483</td><td>0x3583f83f</td><td>0xe8358358</td><td>0x82e82f82</td></tr>
<tr><td class="o">688</td><td>0x3a83983a</td><td>0xc83c83c8</td><td>0x82c82c83</td><td>0x3b83b82c</td><td>0x383483b8</td><td>0x83f83483</td><td>0x3583f83f</td><td>0xe8358358</td><td>0x82f82f82</td><td>0x3a83a83a</td><td>0xc83c83c8</td><td>0x82c82c83</td><td>0x3b83b82d</td><td>0x483483b8</td><td>0x83f83483</td><td>0x3583f83f</td></tr>
<tr><td class="o">704</td><td>0xf8358358</td><td>0x82f82e82</td><td>0x3983a839</td><td>0xd83d83c8</td><td>0x82c82c83</td><td>0x3b83b82c</td><td>0x483483b8</td><td>0x84083483</td><td>0x35840840</td><td>0xf8358358</td><td>0x82f82f82</td><td>0x3a839839</td><td>0xd83c83c8</td><td>0x82c82c83</td><td>0x3a83b82c</td><td>0x483483b8</td></tr>
<tr><td class="o">720</td><td>0x83f83483</td><td>0x3583f840</td><td>0xf8368358</td><td>0x82f82f82</td><td>0x3983a839</td><td>0xc83c83d8</td><td>0x82c82c83</td><td>0x3b83b82c</td><td>0x483483b8</td><td>0x83f83383</td><td>0x3583f83f</td><td>0xf8368358</td><td>0x82f82f82</td><td>0x3a83a839</td><td>0xc83d83d8</td><td>0x82c82c83</td></tr>
</table>
</div></div>
<div id="sb">
<div class="abs" style="left:1px;top:0px;width:15px;height:16px;background:#c3d3fd;border:1px solid #fff;box-sizing:border-box;border-radius:2px;box-shadow:1px 1px 0 #b4c4ee"></div>
<svg class="abs" style="left:4px;top:5px" width="9" height="6" viewBox="0 0 9 6"><path d="M0.700 5.200L4.500 1.400 8.300 5.200" stroke="#4d6185" stroke-width="1.800" fill="none"/></svg>
<div class="abs" style="left:1px;top:17px;width:15px;height:527px;background:linear-gradient(90deg,#c9d8fd,#bccdfa);border:1px solid #fff;box-sizing:border-box;border-radius:2px;box-shadow:0 0 0 1px #b8c8f0 inset,1px 1px 0 #9fb6ea"></div>
<div class="abs" style="left:5px;top:276px;width:7px;height:8px;background:repeating-linear-gradient(#eef3ff 0 1px,#8ca2d8 1px 2px)"></div>
<div class="abs" style="left:1px;top:815px;width:15px;height:16px;background:#c3d3fd;border:1px solid #fff;box-sizing:border-box;border-radius:2px"></div>
<svg class="abs" style="left:4px;top:821px" width="9" height="6" viewBox="0 0 9 6"><path d="M0.700 0.800L4.500 4.600 8.300 0.800" stroke="#4d6185" stroke-width="1.800" fill="none"/></svg>
</div>
<div id="bottom"><div class="abs" style="left:9px;top:2px;font-size:14px;line-height:14px;font-weight:bold;color:#333">&#215;</div><svg class="abs" style="left:1296px;top:5px" width="13" height="13" viewBox="0 0 13 13"><g fill="#b5b2a0"><rect x="9" y="1" width="2" height="2"/><rect x="5" y="5" width="2" height="2"/><rect x="9" y="5" width="2" height="2"/><rect x="1" y="9" width="2" height="2"/><rect x="5" y="9" width="2" height="2"/><rect x="9" y="9" width="2" height="2"/></g><g fill="#fff"><rect x="10" y="2" width="2" height="2"/><rect x="6" y="6" width="2" height="2"/><rect x="10" y="6" width="2" height="2"/><rect x="2" y="10" width="2" height="2"/><rect x="6" y="10" width="2" height="2"/><rect x="10" y="10" width="2" height="2"/></g></svg></div>
</body></html>
